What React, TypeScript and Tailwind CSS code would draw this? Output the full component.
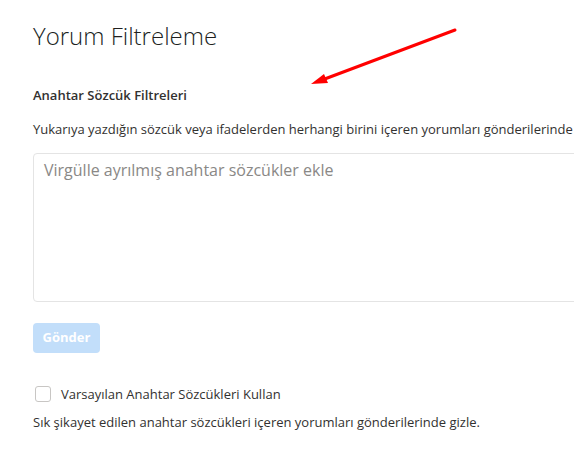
import { useState } from "react";

const App: React.FC = () => {
    const [keywords, setKeywords] = useState("");
    const [useDefaults, setUseDefaults] = useState(false);

    return (
        <div className="relative w-[574px] h-[459px] overflow-hidden bg-white text-[#323130]" style={{ fontFamily: '"Open Sans", "Noto Sans", sans-serif' }}>
            <div className="w-[600px] pl-[33px] pt-[20px] flex flex-col">
                <h1 className="text-[24px] font-light leading-[32px] text-[#201f1e]">Yorum Filtreleme</h1>

                <h2 className="mt-[34px] text-[13px] font-semibold leading-[18px]">Anahtar Sözcük Filtreleri</h2>
                <p className="mt-[16px] text-[13px] leading-[18px] whitespace-nowrap">
                    Yukarıya yazdığın sözcük veya ifadelerden herhangi birini içeren yorumları gönderilerinde gizle.
                </p>

                <textarea
                    className="mt-[15px] w-[580px] h-[149px] border border-[#e4e4e4] rounded-[4px] px-[10px] py-[5px] text-[16px] leading-[22px] resize-none outline-none placeholder:text-[#8a8886]"
                    placeholder="Virgülle ayrılmış anahtar sözcükler ekle"
                    value={keywords}
                    onChange={(e) => setKeywords(e.target.value)}
                />

                <div className="mt-[21px]">
                    <button type="button" disabled className="w-[67px] h-[30px] rounded-[4px] bg-[#c2defa] text-white text-[13px] font-bold">Gönder</button>
                </div>

                <label className="mt-[32px] flex items-center gap-[10px] cursor-pointer">
                    <input
                        type="checkbox"
                        className="appearance-none w-[16px] h-[16px] ml-[2px] border border-[#c8c6c4] rounded-[3px] bg-white"
                        checked={useDefaults}
                        onChange={(e) => setUseDefaults(e.target.checked)}
                    />
                    <span className="text-[13px] leading-[18px]">Varsayılan Anahtar Sözcükleri Kullan</span>
                </label>
                <p className="mt-[10px] text-[13px] leading-[18px]">Sık şikayet edilen anahtar sözcükleri içeren yorumları gönderilerinde gizle.</p>
            </div>

            {/* red annotation arrow */}
            <svg className="absolute left-0 top-0 pointer-events-none" width="574" height="459">
                <line x1="455" y1="30" x2="322" y2="80" stroke="#ff0000" strokeWidth="3" strokeLinecap="round" />
                <polygon points="311,84 324,74 328,83" fill="#ff0000" />
            </svg>
        </div>
    );
};

export default App;
